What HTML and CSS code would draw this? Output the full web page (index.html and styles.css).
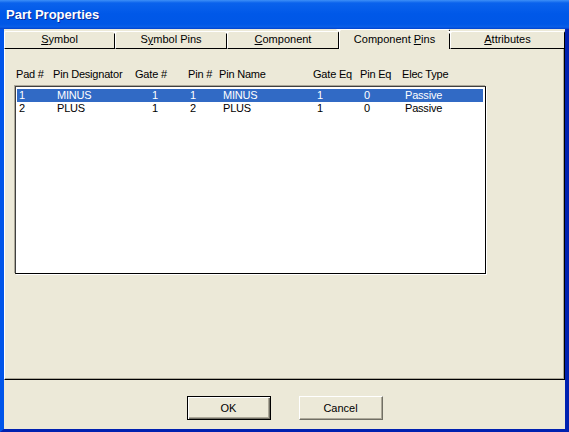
FILE: index.html
```html
<!DOCTYPE html>
<html lang="en">
<head>
  <meta charset="UTF-8" />
  <title>Part Properties</title>
  <link rel="stylesheet" href="styles.css">
</head>
<body>
  <div class="window">
    <div class="titlebar">Part Properties</div>

    <div class="dialog">
      <!-- tab strip -->
      <div class="tabs">
        <div class="tab tab-1"><u>S</u>ymbol</div>
        <div class="tab tab-2">S<u>y</u>mbol Pins</div>
        <div class="tab tab-3"><u>C</u>omponent</div>
        <div class="tab tab-4 active">Component <u>P</u>ins</div>
        <div class="tab tab-5"><u>A</u>ttributes</div>
      </div>

      <div class="panel">
        <div class="list-head">
          <span class="h-pad">Pad #</span>
          <span class="h-des">Pin Designator</span>
          <span class="h-gate">Gate #</span>
          <span class="h-pin">Pin #</span>
          <span class="h-name">Pin Name</span>
          <span class="h-geq">Gate Eq</span>
          <span class="h-peq">Pin Eq</span>
          <span class="h-type">Elec Type</span>
        </div>

        <div class="listbox">
          <div class="row selected">
            <span class="c-pad">1</span>
            <span class="c-des">MINUS</span>
            <span class="c-gate">1</span>
            <span class="c-pin">1</span>
            <span class="c-name">MINUS</span>
            <span class="c-geq">1</span>
            <span class="c-peq">0</span>
            <span class="c-type">Passive</span>
          </div>
          <div class="row">
            <span class="c-pad">2</span>
            <span class="c-des">PLUS</span>
            <span class="c-gate">1</span>
            <span class="c-pin">2</span>
            <span class="c-name">PLUS</span>
            <span class="c-geq">1</span>
            <span class="c-peq">0</span>
            <span class="c-type">Passive</span>
          </div>
        </div>
      </div>

      <div class="buttons">
        <button class="btn default">OK</button>
        <button class="btn">Cancel</button>
      </div>
    </div>
  </div>
</body>
</html>
```

FILE: styles.css
```css
body {
  margin: 0;
  background: #ece9d8;
  font-family: 'Liberation Sans', Arial, sans-serif;
  font-size: 11px;
  color: #000;
}

.window {
  width: 569px;
  height: 432px;
  display: flex;
  flex-direction: column;
  box-sizing: border-box;
}

/* синяя шапка окна */
.titlebar {
  height: 29px;
  flex: none;
  box-sizing: border-box;
  padding: 7px 0 0 6px;
  background: linear-gradient(to bottom, #3d8ff7 0px, #0a62ec 3px, #0058e8 14px, #0057e6 24px, #0a5fe8 27px, #0040cc 29px);
  color: #fff;
  font-weight: 700;
  font-size: 13px;
  text-shadow: 1px 1px 0 #0a2a9a;
}

.dialog {
  flex: 1;
  display: flex;
  flex-direction: column;
  background: #ece9d8;
  border-left: 4px solid #0055ea;
  border-right: 4px solid #0021b0;
  border-bottom: 3px solid #0021b0;
}

/* вкладки */
.tabs {
  display: flex;
  height: 20px;
  align-items: flex-end;
  flex: none;
}
.tab {
  position: relative;
  box-sizing: border-box;
  height: 18px;
  line-height: 15px;
  text-align: center;
  background: #ece9d8;
  border-top: 1px solid #fff;
  border-left: 1px solid #fff;
  border-right: 1px solid #000;
  border-bottom: 1px solid #000;
  border-top-left-radius: 2px;
  border-top-right-radius: 2px;
}
.tab::before {
  content: "";
  position: absolute;
  left: -4px;
  top: -1px;
  border-left: 3px solid transparent;
  border-right: 3px solid transparent;
  border-top: 3px solid #fff;
}
.tab-1::before { display: none; }
.tab-1 { width: 111px; }
.tab-2 { width: 112px; }
.tab-3 { width: 112px; }
.tab-4 { width: 111px; }
.tab-5 { width: 115px; }
.tab.active {
  height: 20px;
  line-height: 19px;
  border-bottom: none;
  border-right: 1px solid #000;
}

.panel {
  flex: none;
  height: 331px;
  box-sizing: border-box;
  padding: 19px 0 0 11px;
  border-left: 1px solid #fff;
  border-right: 1px solid #000;
  border-bottom: 1px solid #000;
  box-shadow: inset -1px -1px 0 #aca899;
  letter-spacing: -0.2px;
}

.list-head {
  display: flex;
  height: 13px;
  line-height: 13px;
  white-space: nowrap;
}
.h-pad { width: 37px; }
.h-des { width: 82px; }
.h-gate { width: 53px; }
.h-pin { width: 31px; }
.h-name { width: 94px; }
.h-geq { width: 47px; }
.h-peq { width: 42px; }

.listbox {
  width: 471px;
  height: 188px;
  margin: 5px 0 0 -1px;
  box-sizing: border-box;
  background: #fff;
  border: 1px solid #000;
  border-top-color: #404040;
  border-left-color: #404040;
  box-shadow: 1px 1px 0 #fff, -1px -1px 0 #aca899;
  padding: 2px 2px 0 1px;
}

.row {
  display: flex;
  height: 13px;
  line-height: 13px;
  padding-left: 2px;
  white-space: nowrap;
}
.row.selected {
  background: #316ac5;
  color: #fff;
}
.c-pad { width: 38px; }
.c-des { width: 95px; }
.c-gate { width: 38px; }
.c-pin { width: 33px; }
.c-name { width: 94px; }
.c-geq { width: 47px; }
.c-peq { width: 41px; }

/* кнопки внизу */
.buttons {
  flex: 1;
  display: flex;
  justify-content: center;
  gap: 28px;
  padding-top: 16px;
  box-sizing: border-box;
}
.btn {
  width: 84px;
  height: 24px;
  padding: 0;
  font-family: 'Liberation Sans', Arial, sans-serif;
  font-size: 11px;
  color: #000;
  background: #ece9d8;
  border: 1px solid;
  border-color: #fff #716f64 #716f64 #fff;
  box-shadow: inset -1px -1px 0 #aca899;
}
.btn.default {
  border: 1px solid #000;
  box-shadow: inset 1px 1px 0 #fff, inset -1px -1px 0 #716f64, inset -2px -2px 0 #aca899;
}
```
